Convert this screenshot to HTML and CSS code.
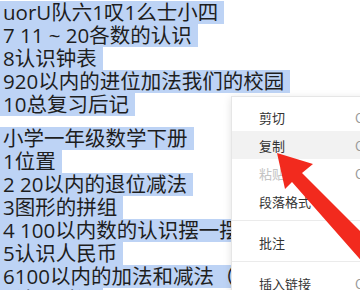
FILE: index.html
```html
<!DOCTYPE html>
<html lang="zh-CN">
<head>
    <meta charset="UTF-8">
    <meta name="viewport" content="width=device-width, initial-scale=1.0">
    <title>小学数学目录</title>
    <link rel="stylesheet" href="styles.css">
</head>
<body>

<div class="doc">
    <div class="group">
        <div class="line"><span class="sel">uorU队六1叹1么士小四</span></div>
        <div class="line"><span class="sel">7 11 ~ 20各数的认识</span></div>
        <div class="line"><span class="sel">8认识钟表</span></div>
        <div class="line"><span class="sel">920以内的进位加法我们的校园</span></div>
        <div class="line"><span class="sel">10总复习后记</span></div>
    </div>
    <div class="group">
        <div class="line"><span class="sel">小学一年级数学下册</span></div>
        <div class="line"><span class="sel">1位置</span></div>
        <div class="line"><span class="sel">2 20以内的退位减法</span></div>
        <div class="line"><span class="sel">3图形的拼组</span></div>
        <div class="line"><span class="sel">4 100以内数的认识摆一摆</span></div>
        <div class="line"><span class="sel">5认识人民币</span></div>
        <div class="line"><span class="sel">6100以内的加法和减法（一）</span></div>
        <div class="line"><span class="sel">7认识时间</span></div>
    </div>
</div>

<div class="menu">
    <div class="item"><span class="label">剪切</span><span class="key">Ctrl+X</span></div>
    <div class="item active"><span class="label">复制</span><span class="key">Ctrl+C</span></div>
    <div class="item disabled"><span class="label">粘贴</span><span class="key">Ctrl+V</span></div>
    <div class="item"><span class="label">段落格式</span></div>
    <div class="sep"></div>
    <div class="item"><span class="label">批注</span></div>
    <div class="sep"></div>
    <div class="item"><span class="label">插入链接</span><span class="key">Ctrl+K</span></div>
</div>

<svg class="arrow" width="360" height="290" viewBox="0 0 360 290">
    <polygon points="277,153 313,164 302,173 380,251 366,266 292,182 285,189" fill="#f22a1e"/>
</svg>

</body>
</html>
```

FILE: styles.css
```css
body {
    margin: 0;
    padding: 0;
    background-color: #ffffff;
    font-family: "Open Sans", "Noto Sans CJK SC", sans-serif;
    overflow: hidden;
}
.doc {
    padding-top: 1px;
    color: #1e1e1e;
    font-size: 20.5px;
}
.group + .group {
    margin-top: 11px;
}
.line {
    height: 23px;
    line-height: 23px;
    white-space: nowrap;
}
.sel {
    display: inline-block;
    height: 23px;
    padding: 0 6px 0 3px;
    background-color: #bdd3f5;
}
.menu {
    position: absolute;
    left: 231px;
    top: 96px;
    width: 150px;
    height: 220px;
    padding-top: 6px;
    background: white;
    border: 1px solid #e6e6e6;
    box-shadow: 0 2px 8px rgba(0, 0, 0, 0.12);
    font-family: "Noto Sans CJK SC", sans-serif;
    font-size: 13px;
    color: #333;
    white-space: nowrap;
}
.item {
    display: flex;
    align-items: center;
    height: 28px;
    padding-left: 27px;
}
.item.active {
    background-color: #f2f2f2;
}
.item.disabled {
    color: #c4c4c4;
}
.label {
    flex-shrink: 0;
    width: 96px;
}
.key {
    flex-shrink: 0;
    color: #9a9a9a;
}
.sep {
    height: 1px;
    margin: 5px 0 7px;
    background-color: #ebebeb;
}
.arrow {
    position: absolute;
    left: 0;
    top: 0;
    pointer-events: none;
}
```
